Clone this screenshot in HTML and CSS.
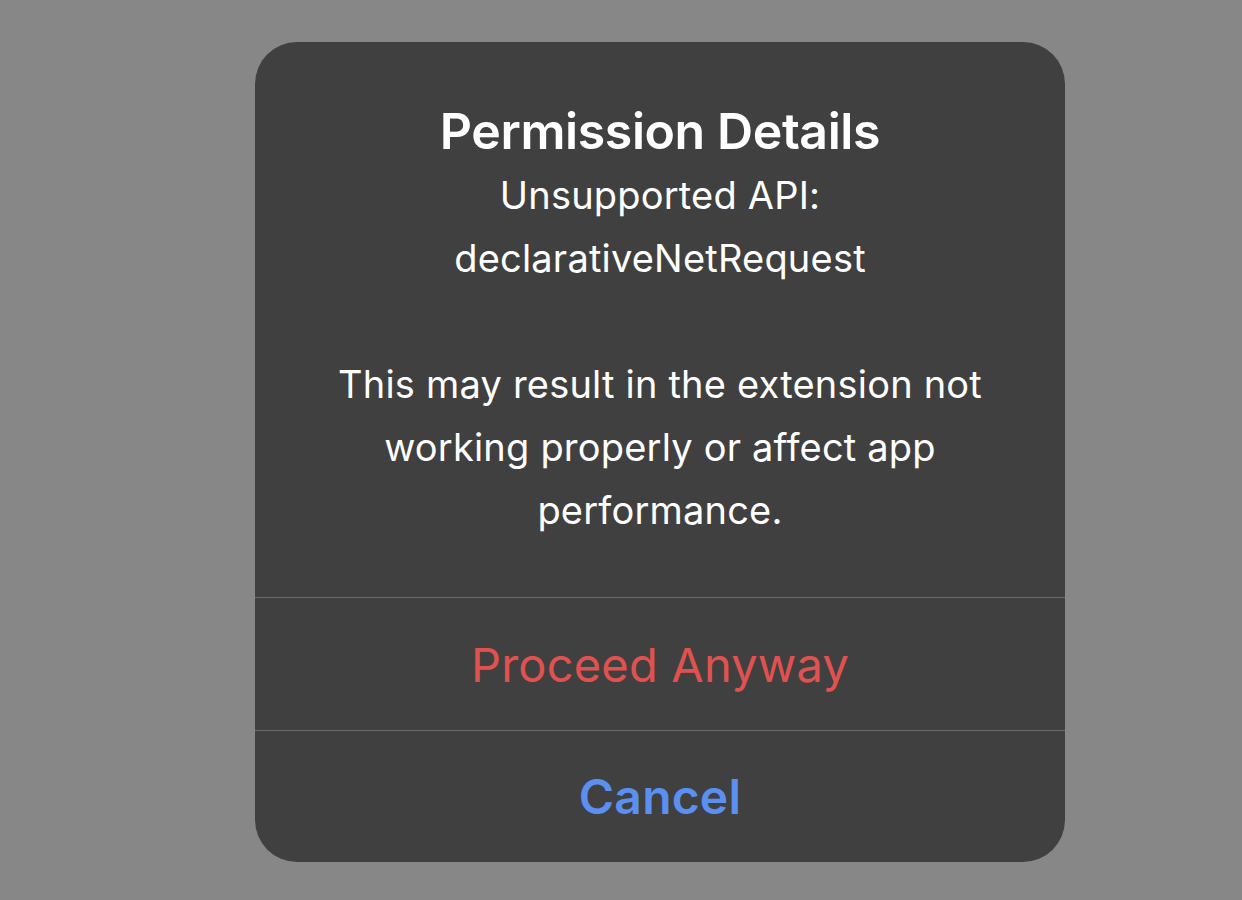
FILE: index.html
```html
<!DOCTYPE html>
<html lang="en">
<head>
<meta charset="utf-8">
<title>Permission Details</title>
<link rel="stylesheet" href="styles.css">
</head>
<body>
<div class="alert" role="alertdialog" aria-labelledby="alert-title">
  <div class="alert-content">
    <h1 class="alert-title" id="alert-title">Permission Details</h1>
    <p class="alert-message">Unsupported API:<br>declarativeNetRequest</p>
    <p class="alert-message alert-message-gap">This may result in the extension not<br>working properly or affect app<br>performance.</p>
  </div>
  <button class="alert-button alert-button-destructive" type="button">Proceed Anyway</button>
  <button class="alert-button alert-button-cancel" type="button">Cancel</button>
</div>
</body>
</html>
```

FILE: styles.css
```css
html, body {
  margin: 0;
  padding: 0;
}

body {
  background: #878787;
  min-height: 900px;
  box-sizing: border-box;
  padding: 42px 0 0 255px;
  font-family: Inter, "Noto Sans", "Liberation Sans", sans-serif;
}

.alert {
  width: 810px;
  height: 820px;
  background: #404040;
  border-radius: 42px;
  display: flex;
  flex-direction: column;
  overflow: hidden;
}

.alert-content {
  height: 555px;
  box-sizing: border-box;
  padding: 56px 30px 0;
  text-align: center;
  color: #ffffff;
}

.alert-title {
  margin: 0;
  font-size: 50px;
  font-weight: 600;
  line-height: 66px;
  letter-spacing: -0.4px;
}

.alert-message {
  margin: 0;
  font-size: 38px;
  font-weight: 400;
  line-height: 63px;
  letter-spacing: 0.2px;
}

.alert-message-gap {
  margin-top: 63px;
}

.alert-button {
  display: block;
  width: 100%;
  border: 0;
  border-top: 1px solid #6a6a6a;
  background: transparent;
  margin: 0;
  padding: 0;
  font-family: inherit;
  text-align: center;
  cursor: pointer;
}

.alert-button-destructive {
  height: 133px;
  color: #e0524f;
  font-size: 47px;
  font-weight: 400;
  letter-spacing: 0.2px;
}

.alert-button-cancel {
  height: 132px;
  color: #5b8ff0;
  font-size: 48px;
  font-weight: 600;
  letter-spacing: 0.2px;
}
```
